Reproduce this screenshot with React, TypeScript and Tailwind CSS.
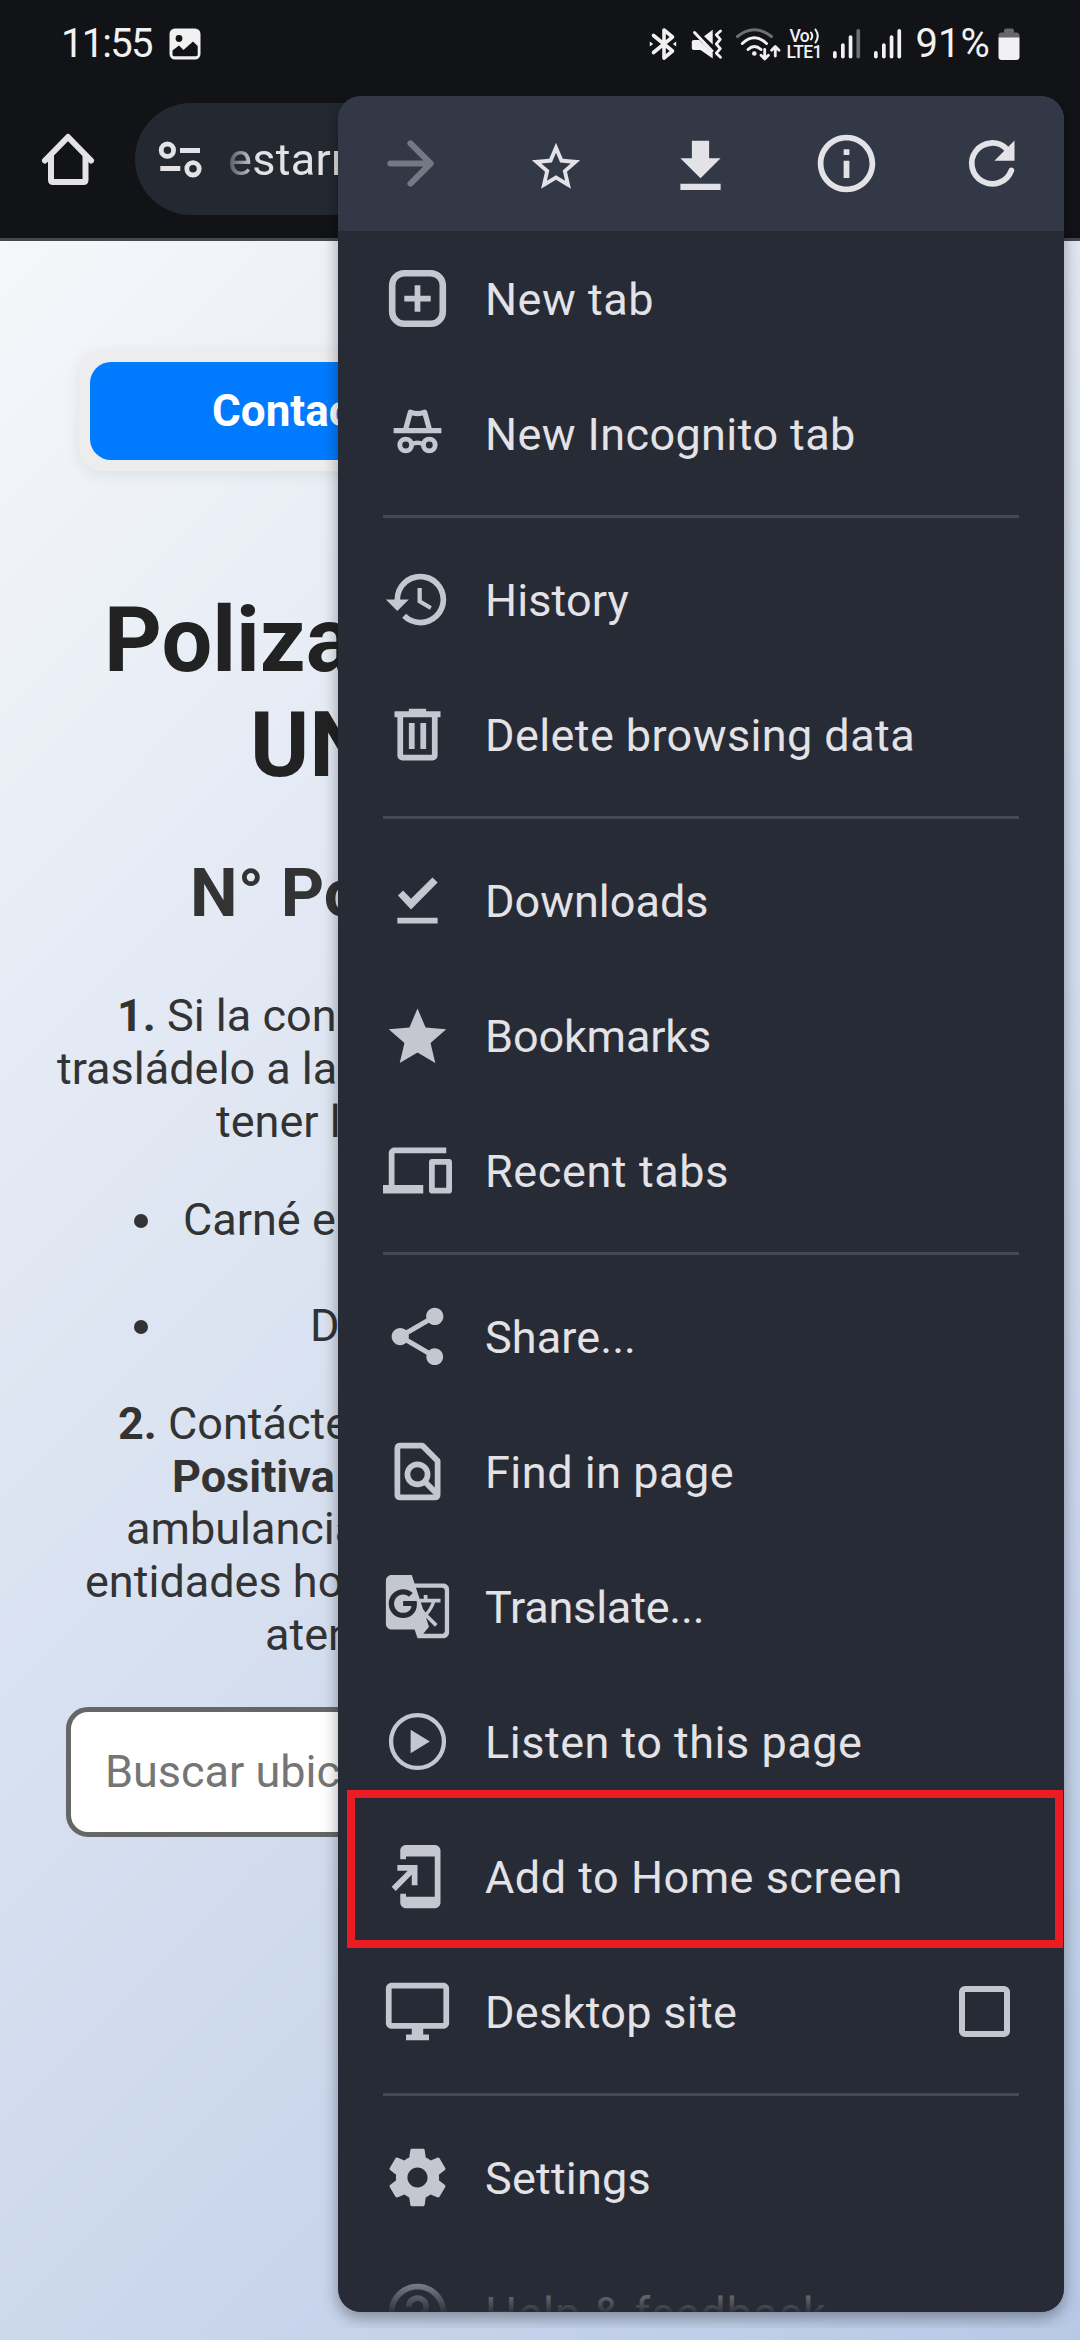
import type { ReactNode } from "react";

const ICON = {
  history:
    "M13 3a9 9 0 0 0-9 9H1l3.89 3.89.07.14L9 12H6c0-3.87 3.13-7 7-7s7 3.13 7 7-3.13 7-7 7c-1.93 0-3.68-.79-4.94-2.06l-1.42 1.42A8.954 8.954 0 0 0 13 21a9 9 0 0 0 0-18zm-1 5v5l4.28 2.54.72-1.21-3.5-2.08V8H12z",
  trash:
    "M9 3h6v.9h5V6h-1v13.2c0 1-.8 1.8-1.8 1.8H6.8C5.8 21 5 20.200 5 19.200V6H4V3.900h5V3zM7 6v13h10V6H7zm2 2h2v9H9V8zm4 0h2v9h-2V8z",
  done: "M5.200 10.300L7 8.500l2.750 2.850L17.200 4 19 5.700l-9.250 9.400L5.200 10.300zM5 18h14v2H5z",
  star: "M12 17.870l6.180 3.730-1.640-7.030L22 9.840l-7.190-.61L12 2.600 9.190 9.230 2 9.840l5.460 4.730-1.640 7.030z",
  devices:
    "M4 6h18V4H4c-1.100 0-2 .9-2 2v11H0v3h14v-3H4V6zm19 2h-6c-.55 0-1 .45-1 1v10c0 .55.45 1 1 1h6c.55 0 1-.45 1-1V9c0-.55-.45-1-1-1zm-1 10h-4v-8h4v8z",
  share:
    "M18 16.080c-.76 0-1.440.3-1.960.770L8.910 12.700c.05-.23.09-.46.09-.7s-.04-.47-.09-.7l7.050-4.110c.54.5 1.250.810 2.040.810 1.660 0 3-1.340 3-3s-1.340-3-3-3-3 1.340-3 3c0 .24.04.47.09.7L8.040 9.810C7.500 9.310 6.790 9 6 9c-1.660 0-3 1.340-3 3s1.340 3 3 3c.79 0 1.500-.31 2.040-.81l7.120 4.160c-.05.21-.08.43-.08.65 0 1.610 1.310 2.920 2.920 2.920s2.920-1.310 2.920-2.920-1.310-2.920-2.920-2.920z",
  translate:
    "M21 4H11l-1-3H3c-1.100 0-2 .9-2 2v15c0 1.100.9 2 2 2h8l1 3h9c1.100 0 2-.9 2-2V6c0-1.100-.9-2-2-2zM7 16c-2.760 0-5-2.240-5-5s2.240-5 5-5c1.350 0 2.480.5 3.350 1.300L9.030 8.570c-.38-.36-1.040-.78-2.030-.78-1.740 0-3.150 1.440-3.150 3.210S5.260 14.210 7 14.210c2.010 0 2.840-1.440 2.920-2.410H7v-1.710h4.680c.07.31.12.61.12 1.020C11.800 13.970 9.890 16 7 16zm6.170-5.420h3.700c-.43 1.250-1.110 2.430-2.050 3.470-.31-.35-.6-.72-.86-1.100l-.79-2.370zm8.330 9.920c0 .55-.45 1-1 1H14l2-2.500-1.040-3.100 3.100 3.100.92-.92-3.300-3.250.02-.02c1.130-1.250 1.930-2.690 2.400-4.220H20v-1.300h-4.530V8h-1.290v1.290h-1.440L11.460 5.500h9.040c.55 0 1 .45 1 1v14z",
  addHome:
    "M18 1.010L8 1c-1.100 0-2 .9-2 2v3h2V5h10v14H8v-1H6v3c0 1.100.9 2 2 2h10c1.100 0 2-.9 2-2V3c0-1.100-.9-1.990-2-1.990zM10 15h2V8H5v2h3.590L3 15.590 4.410 17 10 11.410z",
  desktop:
    "M21 2H3c-1.100 0-2 .9-2 2v12c0 1.100.9 2 2 2h7v2H8v2h8v-2h-2v-2h7c1.100 0 2-.9 2-2V4c0-1.100-.9-2-2-2zm0 14H3V4h18v12z",
  settings:
    "M19.430 12.980c.04-.32.07-.64.07-.98s-.03-.66-.07-.98l2.110-1.650c.19-.15.24-.42.12-.64l-2-3.460c-.12-.22-.39-.3-.61-.22l-2.490 1c-.52-.4-1.080-.73-1.690-.98l-.38-2.650C14.460 2.180 14.250 2 14 2h-4c-.25 0-.46.18-.49.42l-.38 2.650c-.61.25-1.170.59-1.690.98l-2.490-1c-.23-.09-.49 0-.61.22l-2 3.460c-.13.22-.07.49.12.64l2.110 1.650c-.04.32-.07.65-.07.98s.03.66.07.98l-2.110 1.650c-.19.15-.24.42-.12.64l2 3.460c.12.22.39.3.61.22l2.490-1c.52.4 1.080.73 1.690.98l.38 2.650c.03.24.24.42.49.42h4c.25 0 .46-.18.49-.42l.38-2.650c.61-.25 1.170-.59 1.690-.98l2.490 1c.23.09.49 0 .61-.22l2-3.460c.12-.22.07-.49-.12-.64l-2.110-1.650zM12 15.500c-1.930 0-3.500-1.570-3.500-3.500s1.570-3.500 3.500-3.500 3.500 1.570 3.500 3.500-1.570 3.500-3.500 3.500z",
  help: "M11 18h2v-2h-2v2zm1-16C6.480 2 2 6.480 2 12s4.480 10 10 10 10-4.480 10-10S17.520 2 12 2zm0 18c-4.410 0-8-3.590-8-8s3.590-8 8-8 8 3.590 8 8-3.590 8-8 8zm0-14c-2.210 0-4 1.790-4 4h2c0-1.100.9-2 2-2s2 .9 2 2c0 2-3 1.750-3 5h2c0-2.250 3-2.500 3-5 0-2.210-1.790-4-4-4z",
  info: "M11 7h2v2h-2zm0 4h2v6h-2zm1-9C6.480 2 2 6.480 2 12s4.480 10 10 10 10-4.480 10-10S17.520 2 12 2zm0 18c-4.410 0-8-3.590-8-8s3.590-8 8-8 8 3.590 8 8-3.590 8-8 8z",
};

function Icon({ d, children }: { d?: string; children?: ReactNode }) {
  return (
    <svg viewBox="0 0 24 24" className="h-[69px] w-[69px] shrink-0" fill="currentColor">
      {d && <path d={d} />}
      {children}
    </svg>
  );
}

type ItemProps = { icon: ReactNode; label: string; trailing?: ReactNode; tracking?: string };

function Item({ icon, label, trailing, tracking = "tracking-[0.5px]" }: ItemProps) {
  return (
    <div className="flex h-[135px] shrink-0 items-center pr-[54px] pl-[44.5px]">
      <span className="flex text-[#c4c6d0]">{icon}</span>
      <span className={`ml-[33.5px] flex-1 pt-[2px] text-[45px] whitespace-nowrap text-[#e3e2e6] ${tracking}`}>
        {label}
      </span>
      {trailing}
    </div>
  );
}

function Divider() {
  return <div className="mx-[45px] mt-[14px] mb-[14px] h-[3px] shrink-0 bg-[#454851]" />;
}

function SignalBars({ weak = false }: { weak?: boolean }) {
  return (
    <svg viewBox="0 0 28 34" className="h-[34px] w-7" fill="#f1f1f1">
      <rect x="0" y="24" width="3.700" height="7.500" rx="1.800" />
      <rect x="8" y="16.300" width="3.700" height="15.200" rx="1.800" />
      <rect x="15.700" y="8.300" width="3.700" height="23.200" rx="1.800" />
      <rect x="23.400" y="2" width="3.700" height="29.500" rx="1.800" fill={weak ? "#6d6e70" : "#f1f1f1"} />
    </svg>
  );
}

function StatusBar() {
  return (
    <div className="flex h-[88px] items-center pr-[60px] pl-[61px] text-[#f1f1f1]">
      <span className="text-[40px] tracking-[-1.8px]">11:55</span>
      <svg viewBox="0 0 32 32" className="ml-[17px] h-8 w-8">
        <rect x="0.500" y="0.500" width="31" height="31" rx="5.500" fill="#f1f1f1" />
        <circle cx="10" cy="10.500" r="3.400" fill="#111317" />
        <path d="M3.500 22.500L10 17.500l4.500 4.500 9.500-8.500 4.700 4.500v8.500c0 1-.8 1.700-1.700 1.700H5.200c-1 0-1.700-.8-1.700-1.700z" fill="#111317" />
      </svg>

      <div className="ml-auto flex items-center">
        <svg viewBox="0 0 28 34" className="h-[34px] w-7" fill="none" stroke="#f1f1f1" strokeWidth="3.600" strokeLinejoin="round" strokeLinecap="round">
          <path d="M4.500 8.500l19 15.500-8.500 7V3l8.500 7-19 15.500" />
          <path d="M.8 14.500l3.400 2.500-3.400 2.500zM27.200 14.500L23.800 17l3.400 2.500z" fill="#f1f1f1" stroke="none" />
        </svg>
        <svg viewBox="0 0 32 34" className="ml-[14px] h-[34px] w-8" fill="#f1f1f1">
          <path d="M.8 15c0-1.200.8-2 2-2h5.500L21.700 26v5.500L9.500 23H2.800c-1.200 0-2-.8-2-2zM21.700 2.800v14.700L13 9.300z" />
          <path d="M3.500 5.500L21 24" stroke="#f1f1f1" strokeWidth="3" strokeLinecap="round" />
          <path d="M29.500 4l-4.200 3.800 4 4.600-4 4.600 4 4.600-4 4.600 4.200 4" fill="none" stroke="#f1f1f1" strokeWidth="2.800" strokeLinejoin="round" strokeLinecap="round" />
        </svg>
        <svg viewBox="0 0 46 34" className="ml-[12px] h-[34px] w-[46px]" fill="none" stroke="#f1f1f1" strokeWidth="3" strokeLinecap="round" strokeLinejoin="round">
          <path d="M2.500 9.500Q19.300-4 36.500 9.500" stroke="#6d6e70" />
          <path d="M7.300 16.500Q19.300 5 31.500 16.500" />
          <path d="M13 22.500Q19.300 16.500 26 22.500" />
          <circle cx="19.300" cy="26.500" r="2.300" fill="#f1f1f1" stroke="none" />
          <path d="M29.700 22.500v9M26 28.300l3.700 3.700 3.700-3.700M40.300 29v-9M36.600 23.200l3.700-3.700 3.700 3.700" strokeWidth="2.800" />
        </svg>
        <div className="ml-[5px] flex w-[38px] flex-col text-[17.5px] leading-[16.5px] font-medium">
          <span className="flex items-center pl-[3px] tracking-[-0.5px]">
            Vo
            <svg viewBox="0 0 12 16" className="h-4 w-3" fill="none" stroke="#f1f1f1" strokeWidth="2" strokeLinecap="round">
              <path d="M2 4.500q2.500 3.500 0 7M6.500 1.500q4.500 6.500 0 13" />
            </svg>
          </span>
          <span className="tracking-[-0.6px]">LTE1</span>
        </div>
        <div className="ml-[9px]">
          <SignalBars weak />
        </div>
        <div className="ml-[13px]">
          <SignalBars />
        </div>
        <span className="ml-[13px] text-[40px] tracking-[0.1px]">91%</span>
        <svg viewBox="0 0 22 34" className="ml-[8px] h-[34px] w-[22px]">
          <path d="M6 4c0-1.500.8-2.500 2-2.500h6c1.200 0 2 1 2 2.500v1.500h2.500c1.700 0 3 1.300 3 3v2.500H.5V8.500c0-1.700 1.300-3 3-3H6z" fill="#66676a" />
          <path d="M.5 10.500h21V30c0 1.700-1.300 3-3 3h-15c-1.700 0-3-1.300-3-3z" fill="#f1f1f1" />
        </svg>
      </div>
    </div>
  );
}

function AddressBar() {
  return (
    <div className="flex h-[150px] items-start pl-[40px] text-[#e3e2e6]">
      <svg viewBox="0 0 56 58" className="mt-[42px] h-[58px] w-14" fill="none" stroke="currentColor" strokeWidth="6" strokeLinecap="round" strokeLinejoin="round">
        <path d="M5 30.500L28 7l23 23.500" />
        <path d="M11 26v24q0 2 2 2h30.500q2 0 2-2V26" />
      </svg>
      <div className="mt-[15px] ml-[39px] flex h-28 w-[800px] items-center rounded-full bg-[#242830] pl-[23px]">
        <svg viewBox="0 0 44 38" className="h-[38px] w-11" fill="none" stroke="currentColor" strokeWidth="4.800">
          <circle cx="9.400" cy="10.200" r="6.200" />
          <circle cx="35" cy="28.800" r="6.200" />
          <path d="M22 10.500h20M2.300 28.500h20" />
        </svg>
        <span className="ml-[26px] pt-[2px] text-[45px] tracking-[0.3px] [mask-image:linear-gradient(to_right,rgba(0,0,0,0.25),black_30px)]">
          estarr
        </span>
      </div>
    </div>
  );
}

function WebPage() {
  return (
    <div className="flex flex-1 flex-col overflow-hidden bg-linear-[135deg] from-[#f5f7fa] to-[#b8c9e6] text-[45px] leading-[52.8px] whitespace-nowrap text-[#333]">
      <div className="mt-[110px] ml-[79px] flex h-[120px] w-[922px] shrink-0 rounded-[22px] bg-[#ededed] p-[11px] shadow-[0_3px_16px_rgba(0,0,0,0.08)]">
        <div className="flex h-[98px] flex-1 items-center rounded-[21px] bg-[#007bff] pl-[122px] text-[44px] font-bold text-white">
          Contac
        </div>
      </div>

      <h1 className="mt-[117px] text-[90px] leading-[105px] font-bold text-[#222]">
        <div className="pl-[104px]">Poliza</div>
        <div className="pl-[250px]">UN</div>
      </h1>
      <h2 className="mt-[55px] pl-[190px] text-[67.5px] leading-[79px] font-bold">N° Po</h2>

      <div className="mt-[58px]">
        <div className="pl-[117px]">
          <b>1.</b> Si la con
        </div>
        <div className="pl-[57px]">trasládelo a la</div>
        <div className="pl-[216px]">tener l</div>
      </div>

      <ul className="mt-[46px] flex flex-col">
        <li className="flex h-[105.6px] items-start">
          <span className="mt-[20px] ml-[134px] h-[14px] w-[14px] rounded-full bg-[#333]" />
          <span className="ml-[35px]">Carné e</span>
        </li>
        <li className="flex items-start">
          <span className="mt-[20px] ml-[134px] h-[14px] w-[14px] rounded-full bg-[#333]" />
          <span className="ml-[162px]">D</span>
        </li>
      </ul>

      <div className="mt-[45px]">
        <div className="pl-[118px]">
          <b>2.</b> Contácte
        </div>
        <div className="pl-[172px] font-bold">Positiva</div>
        <div className="pl-[126px]">ambulancia</div>
        <div className="pl-[85px]">entidades ho</div>
        <div className="pl-[265px]">aten</div>
      </div>

      <div className="mt-[45px] ml-[66px] flex h-[130px] w-[948px] items-center rounded-[22px] border-[5px] border-[#666] bg-white pt-[2px] pl-[34px] text-[#757575]">
        Buscar ubic
      </div>
    </div>
  );
}

function MenuToolbar() {
  return (
    <div className="grid h-[135px] shrink-0 grid-cols-5 place-items-center bg-[#333846] text-[#e3e2e6]">
      <span className="text-[#767983]">
        <Icon>
          <path d="M5 12h13.500M12 5l7 7-7 7" fill="none" stroke="currentColor" strokeWidth="2.100" strokeLinecap="round" strokeLinejoin="round" />
        </Icon>
      </span>
      <svg viewBox="0 0 24 24" className="mt-[6px] h-[58px] w-[58px]" fill="currentColor">
        <path d="M22 9.240l-7.190-.62L12 2 9.190 8.630 2 9.240l5.460 4.730L5.820 21 12 17.270 18.180 21l-1.630-7.030L22 9.240zM12 15.400l-3.760 2.270 1-4.280-3.320-2.880 4.380-.38L12 6.100l1.710 4.040 4.380.38-3.320 2.880 1 4.280L12 15.400z" />
      </svg>
      <div className="pt-[5px]">
        <Icon d="M19 9.100h-4V3H9v6.100H5l7 7 7-7zM5 18v2.200h14V18H5z" />
      </div>
      <Icon d={ICON.info} />
      <Icon>
        <path d="M18.900 14.400A7.100 7.100 0 1 1 17.300 7" fill="none" stroke="currentColor" strokeWidth="2" strokeLinecap="round" />
        <path d="M20 4v7h-7z" />
      </Icon>
    </div>
  );
}

function Menu() {
  return (
    <div className="absolute top-[96px] left-[338px] flex h-[2216px] w-[726px] flex-col overflow-hidden rounded-[23px] bg-[#272b35]">
      <MenuToolbar />
      <Item
        label="New tab"
        icon={
          <Icon>
            <rect x="3.200" y="3.200" width="17.600" height="17.600" rx="4.200" fill="none" stroke="currentColor" strokeWidth="2.300" />
            <path d="M12 7.400v9.200M7.400 12h9.200" fill="none" stroke="currentColor" strokeWidth="2" />
          </Icon>
        }
      />
      <Item
        label="New Incognito tab"
        tracking="tracking-[0.4px]"
        icon={
          <Icon>
            <path d="M3.700 10.100h16.600v1.800H3.700z" />
            <path d="M7.800 10.800l1.700-6.200q1.200.5 2.500.5t2.500-.5l1.700 6.200" fill="none" stroke="currentColor" strokeWidth="1.800" strokeLinejoin="round" />
            <circle cx="7.900" cy="16" r="2.050" fill="none" stroke="currentColor" strokeWidth="1.700" />
            <circle cx="16.100" cy="16" r="2.050" fill="none" stroke="currentColor" strokeWidth="1.700" />
            <path d="M10 15.700q2-1 4 0" fill="none" stroke="currentColor" strokeWidth="1.600" />
          </Icon>
        }
      />
      <Divider />
      <Item label="History" tracking="tracking-[0.1px]" icon={<Icon d={ICON.history} />} />
      <Item label="Delete browsing data" tracking="tracking-[0.4px]" icon={<Icon d={ICON.trash} />} />
      <Divider />
      <Item label="Downloads" tracking="tracking-normal" icon={<Icon d={ICON.done} />} />
      <Item label="Bookmarks" tracking="tracking-[-0.15px]" icon={<Icon d={ICON.star} />} />
      <Item label="Recent tabs" tracking="tracking-[0.6px]" icon={<Icon d={ICON.devices} />} />
      <Divider />
      <Item label="Share..." tracking="tracking-[0.1px]" icon={<Icon d={ICON.share} />} />
      <Item
        label="Find in page"
        icon={
          <Icon>
            <path d="M13.700 3H6Q5 3 5 4v16q0 1 1 1h12q1 0 1-1V8.300z" fill="none" stroke="currentColor" strokeWidth="2" strokeLinejoin="round" />
            <circle cx="12" cy="13" r="3.500" fill="none" stroke="currentColor" strokeWidth="2" />
            <path d="M14.300 15.300l4.400 4.400" fill="none" stroke="currentColor" strokeWidth="2" />
          </Icon>
        }
      />
      <Item label="Translate..." tracking="tracking-[-0.2px]" icon={<Icon d={ICON.translate} />} />
      <Item
        label="Listen to this page"
        icon={
          <Icon>
            <circle cx="12" cy="12" r="9.200" fill="none" stroke="currentColor" strokeWidth="1.500" />
            <path d="M9.600 7.900v8.200l6.700-4.100z" />
          </Icon>
        }
      />
      <Item label="Add to Home screen" icon={<Icon d={ICON.addHome} />} />
      <Item
        label="Desktop site"
        tracking="tracking-[0.3px]"
        icon={<Icon d={ICON.desktop} />}
        trailing={<span className="h-[51px] w-[51px] rounded-[6px] border-6 border-[#c4c6d0]" />}
      />
      <Divider />
      <Item label="Settings" tracking="tracking-[0.2px]" icon={<Icon d={ICON.settings} />} />
      <Item label="Help & feedback" tracking="tracking-[1px]" icon={<Icon d={ICON.help} />} />
      <div className="absolute inset-x-0 bottom-0 h-[56px] bg-linear-to-b from-[#272b35]/0 to-[#272b35]/95" />
      <div className="absolute top-[1694px] left-[9px] h-[158px] w-[716px] border-8 border-[#ed1c24]" />
    </div>
  );
}

export default function App() {
  return (
    <div className="relative flex h-[2340px] w-[1080px] flex-col overflow-hidden bg-[#111317] font-['Roboto',sans-serif]">
      <StatusBar />
      <AddressBar />
      <div className="h-[3px] bg-[#45474c]" />
      <WebPage />
      <div className="absolute top-[80px] left-[318px] h-[2248px] w-[762px] overflow-hidden">
        <div className="mt-[16px] ml-5 h-[2216px] w-[726px] rounded-[23px] shadow-[0_6px_16px_rgba(0,0,0,0.36)]" />
      </div>
      <Menu />
    </div>
  );
}
